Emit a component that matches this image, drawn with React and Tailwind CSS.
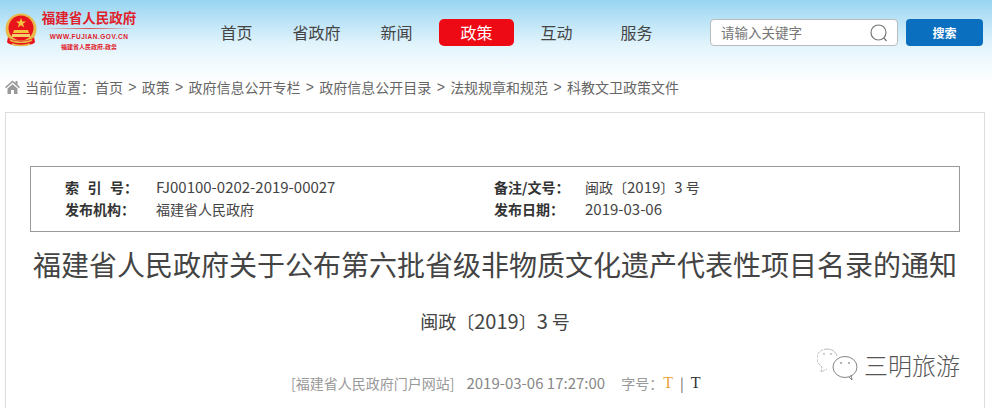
import React from "react";

const FONT = "font-['Noto_Sans_CJK_SC','Liberation_Sans',sans-serif]";
const NAV = ["首页", "省政府", "新闻", "政策", "互动", "服务"];
const CRUMBS = ["首页", "政策", "政府信息公开专栏", "政府信息公开目录", "法规规章和规范", "科教文卫政策文件"];

function Emblem() {
  return (
    <svg width="34" height="36" viewBox="0 0 34 36" className="shrink-0">
      <circle cx="17" cy="16" r="15.5" fill="#e9b949" />
      <circle cx="17" cy="15" r="12.5" fill="#e8141c" />
      <path d="M17 5l1.4 3.6h3.6l-3 2.2 1.2 3.6-3.2-2.2-3.2 2.2 1.2-3.6-3-2.2h3.6z" fill="#f3c63f" />
      <path d="M9 20h16l-1-3H10z" fill="#f3c63f" />
      <rect x="8" y="21" width="18" height="3" fill="#f3d06a" />
      <path d="M4 24c4 5 22 5 26 0l1 5c-3 5-25 5-28 0z" fill="#e8141c" />
      <path d="M6 27c5 3 17 3 22 0" stroke="#e9b949" strokeWidth="1.5" fill="none" />
      <path d="M8 31c5 2 13 2 18 0" stroke="#e9b949" strokeWidth="1.5" fill="none" />
    </svg>
  );
}

function Logo() {
  return (
    <div className="flex items-center shrink-0 w-[194px] h-[60px] pl-[4px] pt-[1px]">
      <Emblem />
      <div className="ml-[3px] flex flex-col items-center w-[96px] mt-[-3px]">
        <div className="text-[13.5px] leading-[18px] font-bold text-[#e0202a] whitespace-nowrap">福建省人民政府</div>
        <div className="mt-[2px] h-px w-[92px] bg-gradient-to-r from-transparent via-[#d9534f] to-transparent" />
        <div className="mt-[3px] text-[6.5px] leading-[9px] font-bold text-[#e0202a] font-['Liberation_Sans'] tracking-[0.5px] whitespace-nowrap">WWW.FUJIAN.GOV.CN</div>
        <div className="mt-[1px] text-[6px] leading-[9px] font-bold text-[#e0202a] whitespace-nowrap">福建省人民政府.政务</div>
      </div>
    </div>
  );
}

function Header() {
  return (
    <div className="flex items-start h-[60px]">
      <Logo />
      <nav className="flex gap-[5px] mt-[19px] ml-[5px]">
        {NAV.map((n) => (
          <div
            key={n}
            className={`w-[75px] h-[27px] rounded-[5px] text-[16px] leading-[27px] text-center ${n === "政策" ? "bg-[#ee0a14] text-white" : "text-[#444]"}`}
          >
            {n}
          </div>
        ))}
      </nav>
      <div className="ml-[36px] mt-[19px] w-[188px] h-[27px] flex items-center justify-between rounded-[4px] border border-[#bbb] bg-white pl-[10px] pr-[8px]">
        <span className="text-[13.5px] text-[#777]">请输入关键字</span>
        <svg width="20" height="20" viewBox="0 0 20 20" fill="none" stroke="#777" strokeWidth="1.2">
          <circle cx="9.5" cy="9.5" r="7.5" />
          <path d="M15 15l2.5 3" />
        </svg>
      </div>
      <div className="ml-[8px] mt-[19px] w-[77px] h-[27px] rounded-[4px] bg-[#0b6fc0] text-white text-[12px] font-bold leading-[27px] text-center">搜索</div>
    </div>
  );
}

function Breadcrumb() {
  return (
    <div className="flex items-center h-[20px] mt-[17px] pl-[5px] text-[14px] text-[#666] whitespace-nowrap">
      <svg width="15" height="14" viewBox="0 0 15 14" fill="#999" className="mr-[5px]">
        <path d="M7.5 0.5L0 7l1 1.2L7.5 2.6 14 8.2 15 7l-2.5-2.2V1h-2v2.1z" />
        <path d="M2.5 8.6L7.5 4.3l5 4.3V14H9v-4H6v4H2.5z" />
      </svg>
      <span className="w-[70px]">当前位置：</span>
      {CRUMBS.map((c, i) => (
        <React.Fragment key={c}>
          {i > 0 && <span className="mx-[5.3px] font-['Liberation_Sans']">&gt;</span>}
          <span>{c}</span>
        </React.Fragment>
      ))}
    </div>
  );
}

function InfoCell({ label, children }) {
  return (
    <div className="flex w-[429px] h-[22px] items-center">
      <span className="w-[91px] font-bold text-[#333] whitespace-nowrap">{label}</span>
      <span className="text-[#444] whitespace-nowrap">{children}</span>
    </div>
  );
}

function InfoBox() {
  return (
    <div className="mx-[24px] mt-[53px] h-[66px] border border-[#999] pl-[34px] pt-[9px] text-[14px]">
      <div className="flex">
        <InfoCell label={<><span className="tracking-[8.5px]">索引</span>号：</>}>
          <span className="text-[15px]">FJ00100-0202-2019-00027</span>
        </InfoCell>
        <InfoCell label="备注/文号：">
          闽政〔<span className="text-[15px]">2019</span>〕<span className="text-[15px]">3</span> 号
        </InfoCell>
      </div>
      <div className="flex">
        <InfoCell label="发布机构：">福建省人民政府</InfoCell>
        <InfoCell label="发布日期：">
          <span className="text-[15px]">2019-03-06</span>
        </InfoCell>
      </div>
    </div>
  );
}

function Watermark() {
  return (
    <div className="absolute left-[817px] top-[348px] flex items-center">
      <svg width="42" height="33" viewBox="0 0 42 33" fill="none" strokeWidth="0.8">
        <path d="M10 1C4 1 0 5 0 10c0 4 2 7 5 9l-1 5 6-3" stroke="#aaa" strokeDasharray="3 1" />
        <path d="M10 1c5 0 9 3 10 7" stroke="#aaa" />
        <ellipse cx="28" cy="19" rx="12" ry="10.5" stroke="#666" />
        <path d="M32 29l3 3-1-5" stroke="#666" />
        <circle cx="7" cy="6" r="0.8" fill="#888" />
        <circle cx="14" cy="6" r="0.8" fill="#888" />
        <circle cx="24" cy="15" r="0.8" fill="#555" />
        <circle cx="32" cy="15" r="0.8" fill="#555" />
      </svg>
      <span className="ml-[5px] text-[24px] leading-[30px] font-light text-[#555] whitespace-nowrap">三明旅游</span>
    </div>
  );
}

export default function App() {
  return (
    <div className={`relative w-[992px] h-[408px] overflow-hidden ${FONT} bg-gradient-to-b from-[#98d5f1] via-[#e2f4fc] via-[11%] to-white to-[20%]`}>
      <div className="h-[112px] overflow-hidden">
        <Header />
        <Breadcrumb />
      </div>
      <div className="ml-[5px] w-[980px] h-[320px] border border-[#ddd] bg-white">
        <InfoBox />
        <h1 className="mt-[11px] text-[28px] leading-[42px] font-normal text-[#444] text-center whitespace-nowrap">
          福建省人民政府关于公布第六批省级非物质文化遗产代表性项目名录的通知
        </h1>
        <div className="mt-[24px] text-[18px] leading-[24px] text-[#444] text-center">
          闽政〔<span className="text-[20px]">2019</span>〕<span className="text-[20px]">3</span> 号
        </div>
        <div className="mt-[40px] pl-[285px] flex items-center text-[14px] leading-[20px] text-[#999] whitespace-nowrap">
          <span>[福建省人民政府门户网站]</span>
          <span className="ml-[12px] text-[15px] text-[#888]">2019-03-06 17:27:00</span>
          <span className="ml-[16px]">字号：</span>
          <span className="font-['Liberation_Serif'] text-[16px] text-[#e8a33d]">T</span>
          <span className="mx-[7px] text-[#666]">|</span>
          <span className="font-['Liberation_Serif'] text-[16px] text-[#333]">T</span>
        </div>
      </div>
      <Watermark />
    </div>
  );
}
